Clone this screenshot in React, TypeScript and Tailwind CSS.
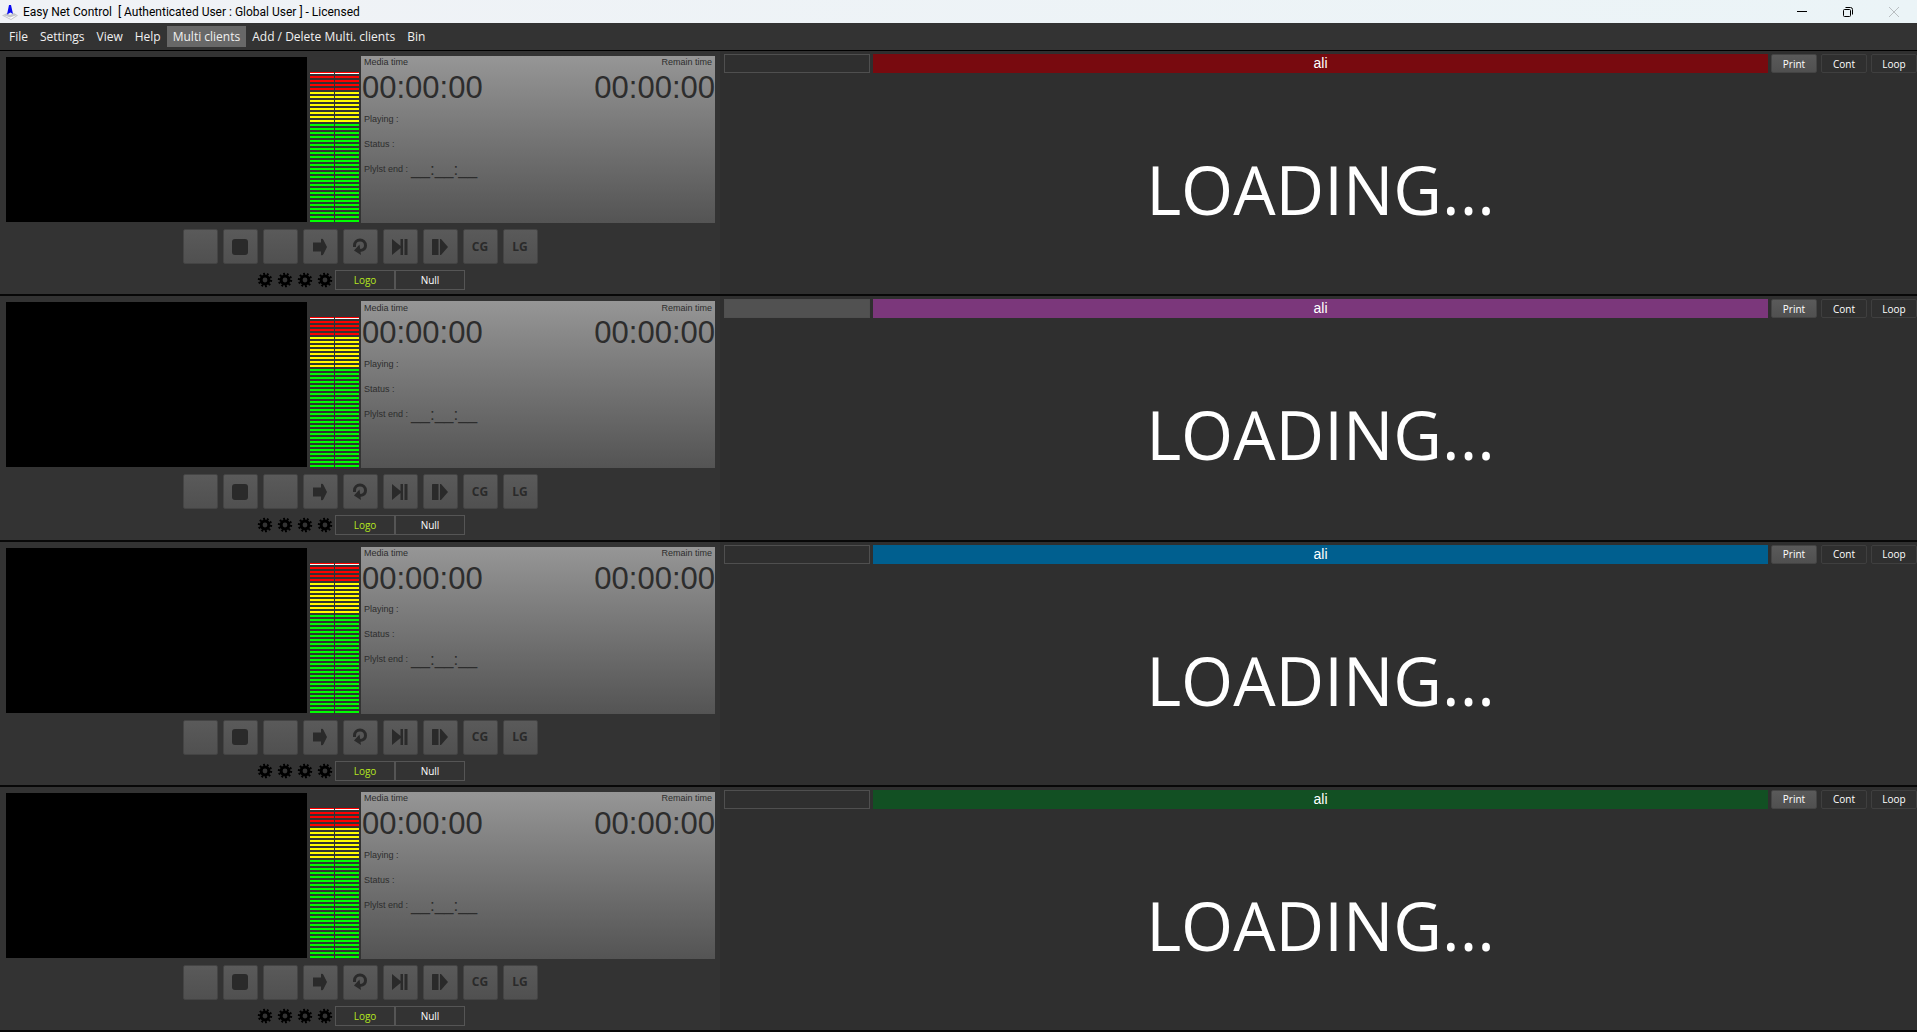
import { useState } from "react";
import type { ReactNode } from "react";
import clsx from "clsx";

type Client = {
  id: number;
  name: string;
  barColor: string;
  filled?: boolean;
};

const clients: Client[] = [
  { id: 1, name: "ali", barColor: "bg-[#780a0f]" },
  { id: 2, name: "ali", barColor: "bg-[#7b377b]", filled: true },
  { id: 3, name: "ali", barColor: "bg-[#005f8f]" },
  { id: 4, name: "ali", barColor: "bg-[#125023]" },
];

const menuItems = [
  "File",
  "Settings",
  "View",
  "Help",
  "Multi clients",
  "Add / Delete Multi. clients",
  "Bin",
];

// top to bottom: 4 red, 8 yellow, 25 green
const meterBars = [
  ...Array(4).fill("bg-[#ff0000]"),
  ...Array(8).fill("bg-[#ffff00]"),
  ...Array(25).fill("bg-[#00ff00]"),
] as string[];

function AppLogo() {
  return (
    <svg width="16" height="16" viewBox="0 0 16 16" aria-hidden="true">
      <path d="M0 11.5 L5 9 L8 11 L12 9 L16 11.5 L9 16 Z" fill="#c3c6cb" />
      <path d="M1 11 L8 13.5 L15 11 L9 15 Z" fill="#ffffff" />
      <path d="M7 1 H9 L11 10 L8.5 8.5 L5 10.5 Z" fill="#0a0af0" />
    </svg>
  );
}

function TitleBar() {
  return (
    <header className="flex h-[23px] items-center bg-linear-to-r from-[#f0f2f6] to-[#ebf4f7] pl-[2px] text-black">
      <AppLogo />
      <h1 className="ml-[5px] flex-1 font-[Roboto,sans-serif] text-[12px] leading-4 whitespace-pre">
        {"Easy Net Control  [ Authenticated User : Global User ] - Licensed"}
      </h1>
      <button aria-label="Minimize" className="flex h-full w-[46px] items-center justify-center">
        <svg width="12" height="12" viewBox="0 0 12 12" stroke="#000" fill="none">
          <path d="M1 5.5 H11" />
        </svg>
      </button>
      <button aria-label="Restore" className="flex h-full w-[46px] items-center justify-center">
        <svg width="12" height="12" viewBox="0 0 12 12" stroke="#000" fill="none">
          <rect x="1.5" y="3.5" width="7" height="7" rx="1" />
          <path d="M3.5 1.5 H8.5 Q10.5 1.5 10.5 3.5 V8.5" />
        </svg>
      </button>
      <button aria-label="Close" className="flex h-full w-[46px] items-center justify-center">
        <svg width="12" height="12" viewBox="0 0 12 12" stroke="#b9bec1" fill="none">
          <path d="M1 1 L11 11 M11 1 L1 11" />
        </svg>
      </button>
    </header>
  );
}

function MenuBar() {
  const [active, setActive] = useState("Multi clients");

  return (
    <nav className="flex h-7 items-center border-b border-black bg-[#333333] pl-[3px]">
      {menuItems.map((item) => (
        <button
          key={item}
          onClick={() => setActive(item)}
          className={clsx(
            "h-[21px] px-[6px] text-[12px] leading-4 text-[#f0f0f0]",
            item === active && "bg-[#686868]"
          )}
        >
          {item}
        </button>
      ))}
    </nav>
  );
}

function LevelMeter() {
  return (
    <div className="mt-4 ml-[3px] flex w-[49px] shrink-0 gap-px" role="img" aria-label="Audio level">
      {["left", "right"].map((channel) => (
        <div key={channel} className="flex flex-1 flex-col gap-[2px]">
          <div className="h-[2px] border-t border-[#ff0000] bg-white" />
          {meterBars.map((color, i) => (
            <div key={i} className={clsx("h-[2px]", color)} />
          ))}
        </div>
      ))}
    </div>
  );
}

function InfoPanel() {
  return (
    <div className="ml-[2px] h-[167px] flex-1 bg-linear-to-b from-[#969696] to-[#545454] pt-px font-['Liberation_Sans',Arial,sans-serif] text-[9px] text-[#2d2d2d]">
      <div className="flex h-3 items-center justify-between px-[3px]">
        <span>Media time</span>
        <span>Remain time</span>
      </div>
      <div className="mt-1 flex h-[30px] items-center justify-between pl-px text-[31px] leading-[30px]">
        <time>00:00:00</time>
        <time>00:00:00</time>
      </div>
      <div className="mt-1 px-[3px]">
        <p className="flex h-[25px] items-center">Playing :</p>
        <p className="flex h-[25px] items-center">Status :</p>
        <p className="flex h-[25px] items-center gap-[3px]">
          Plylst end :<span className="text-[17px]">__:__:__</span>
        </p>
      </div>
    </div>
  );
}

function ControlButton({ label, children }: { label: string; children?: ReactNode }) {
  return (
    <button
      aria-label={label}
      className="flex size-[35px] items-center justify-center rounded-[2px] border border-[#444444] bg-linear-to-b from-[#5a5a5a] to-[#505050] text-[12px] font-bold text-[#2a2a2a]"
    >
      {children}
    </button>
  );
}

function TransportControls() {
  return (
    <div className="mt-[6px] flex justify-center gap-[5px]">
      <ControlButton label="Play" />
      <ControlButton label="Stop">
        <svg width="16" height="16" viewBox="0 0 16 16" fill="currentColor">
          <rect width="16" height="16" rx="3" />
        </svg>
      </ControlButton>
      <ControlButton label="Pause" />
      <ControlButton label="Next">
        <svg width="14" height="18" viewBox="0 0 14 18" fill="currentColor">
          <path d="M0 4.5 H8 V1 Q9.5 0 10.5 2 L14 9 L10.5 16 Q9.5 18 8 17 V13.5 H0 Z" />
        </svg>
      </ControlButton>
      <ControlButton label="Repeat">
        <svg width="16" height="18" viewBox="0 0 16 18">
          <path
            d="M2.5 9 V7.5 A5.5 5.5 0 0 1 13.5 7.5 Q13.5 12 8 12.5"
            fill="none"
            stroke="currentColor"
            strokeWidth="3"
          />
          <path d="M7.5 6.5 L9 17 L2 12.5 Z" fill="currentColor" />
        </svg>
      </ControlButton>
      <ControlButton label="Play next">
        <svg width="16" height="16" viewBox="0 0 16 16" fill="currentColor">
          <path d="M0 0 L8.5 7 V0 H11 V16 H8.5 V9 L0 16 Z" />
          <rect x="12.5" width="3" height="16" />
        </svg>
      </ControlButton>
      <ControlButton label="Step forward">
        <svg width="16" height="16" viewBox="0 0 16 16" fill="currentColor">
          <rect width="6.5" height="16" rx="0.5" />
          <path d="M8 0 H9 L16 8 L9 16 H8 Z" />
        </svg>
      </ControlButton>
      <ControlButton label="CG">CG</ControlButton>
      <ControlButton label="LG">LG</ControlButton>
    </div>
  );
}

function GearIcon() {
  return (
    <svg width="16" height="16" viewBox="0 0 16 16" fill="none" stroke="#000">
      <circle cx="8" cy="8" r="3.9" strokeWidth="3" />
      <circle cx="8" cy="8" r="6" strokeWidth="2.4" pathLength="20" strokeDasharray="1 1" />
    </svg>
  );
}

function OutputControls() {
  return (
    <div className="mt-[6px] flex h-5 justify-center text-[10px]">
      {[1, 2, 3, 4].map((n) => (
        <button key={n} aria-label={`Output settings ${n}`} className="flex w-5 items-center justify-center">
          <GearIcon />
        </button>
      ))}
      <button className="w-[60px] border border-[#555555] pt-px text-[#b4e61e]">Logo</button>
      <button className="w-[70px] border border-[#555555] pt-px text-white">Null</button>
    </div>
  );
}

function PlaylistPane({ client }: { client: Client }) {
  return (
    <div className="flex min-w-0 flex-1 flex-col bg-[#2f2f2f] pt-[3px] pl-1">
      <div className="flex h-[19px]">
        <input
          type="text"
          aria-label={`Search playlist ${client.id}`}
          className={clsx(
            "w-[146px] border border-[#4f4f4f] px-1 text-[10px] text-white outline-none",
            client.filled && "bg-[#515151]"
          )}
        />
        <h2
          className={clsx(
            "ml-[3px] flex flex-1 items-center justify-center font-['Liberation_Sans',Arial,sans-serif] text-[14px] text-white",
            client.barColor
          )}
        >
          {client.name}
        </h2>
        <div className="ml-[3px] flex gap-1 text-[10px] text-white">
          <button className="w-[46px] rounded-[2px] border border-[#444444] bg-linear-to-b from-[#5a5a5a] to-[#505050] pt-px">
            Print
          </button>
          <button className="w-[46px] rounded-[2px] border border-[#3f3f3f] pt-px">Cont</button>
          <button className="w-[46px] rounded-[2px] border border-[#3f3f3f] pt-px">Loop</button>
        </div>
      </div>
      <div className="flex flex-1 items-center justify-center pt-3 text-[67px] leading-none text-white">
        LOADING...
      </div>
    </div>
  );
}

function ClientRow({ client }: { client: Client }) {
  return (
    <section className="flex border-b-2 border-[#080808] bg-[#333333]">
      <div className="w-[720px] shrink-0 pt-[5px] pb-[3px]">
        <div className="flex pr-[5px] pl-[6px]">
          <div className="mt-px h-[165px] w-[301px] shrink-0 bg-black" />
          <LevelMeter />
          <InfoPanel />
        </div>
        <TransportControls />
        <OutputControls />
      </div>
      <PlaylistPane client={client} />
    </section>
  );
}

export default function App() {
  return (
    <div className="flex min-h-screen flex-col bg-[#333333] font-['Open_Sans','Noto_Sans',sans-serif]">
      <TitleBar />
      <MenuBar />
      <main className="grid flex-1 grid-rows-4">
        {clients.map((client) => (
          <ClientRow key={client.id} client={client} />
        ))}
      </main>
    </div>
  );
}
